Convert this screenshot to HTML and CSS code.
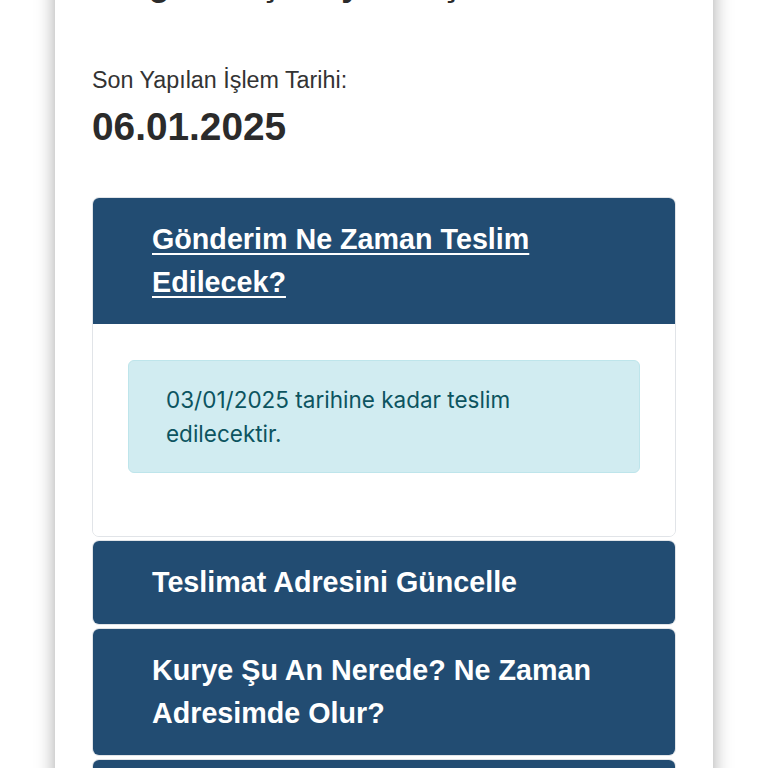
FILE: index.html
```html
<!DOCTYPE html>
<html lang="tr">
<head>
<meta charset="utf-8">
<title>Gönderi Takibi</title>
<link rel="stylesheet" href="styles.css">
</head>
<body>
<main class="card">
  <h1 class="title">Kargonuz Şubeye Ulaştı</h1>
  <p class="label">Son Yapılan İşlem Tarihi:</p>
  <p class="date">06.01.2025</p>
  <div class="accordion">
    <section class="item open">
      <div class="item-head"><a class="item-link" href="#">Gönderim Ne Zaman Teslim Edilecek?</a></div>
      <div class="item-body">
        <div class="alert">03/01/2025 tarihine kadar teslim edilecektir.</div>
      </div>
    </section>
    <section class="item">
      <div class="item-head"><span class="item-title">Teslimat Adresini Güncelle</span></div>
    </section>
    <section class="item">
      <div class="item-head"><span class="item-title">Kurye Şu An Nerede? Ne Zaman Adresimde Olur?</span></div>
    </section>
    <section class="item">
      <div class="item-head"><span class="item-title">Teslimat Noktasını Değiştir</span></div>
    </section>
  </div>
</main>
</body>
</html>
```
FILE: styles.css
```css
html, body {
  margin: 0;
  padding: 0;
  background: #ffffff;
}
body {
  font-family: "Liberation Sans", Arial, sans-serif;
  color: #2b2b2b;
  overflow: hidden;
}
.card {
  width: 584px;
  margin: -36px auto 0;
  padding: 0 37px 40px;
  background: #ffffff;
  box-shadow: 0 0 18px rgba(0, 0, 0, 0.35);
}
.title {
  margin: 0;
  font-size: 34px;
  line-height: 40px;
  font-weight: 700;
  color: #2b2b2b;
}
.label {
  margin: 61px 0 0;
  font-size: 23.3px;
  line-height: 30px;
  color: #333333;
}
.date {
  margin: 9px 0 0;
  font-size: 38.8px;
  line-height: 46px;
  font-weight: 700;
  color: #2b2b2b;
}
.accordion {
  margin-top: 47px;
  display: flex;
  flex-direction: column;
  gap: 3px;
}
.item {
  border: 1px solid #e1e4e8;
  border-radius: 7px;
  overflow: hidden;
}
.item-head {
  background: #224c72;
  padding: 20px 60px 20px 59px;
  font-size: 28.7px;
  line-height: 43px;
  font-weight: 700;
  color: #ffffff;
}
.item-link {
  color: #ffffff;
  text-decoration: underline;
  text-decoration-thickness: 2px;
  text-underline-offset: 4px;
}
.item-body {
  background: #ffffff;
  padding: 36px 35px 63px;
}
.alert {
  background: #d1ecf1;
  border: 1px solid #bee5eb;
  border-radius: 6px;
  padding: 21.5px 37px;
  color: #0c5460;
  font-family: "Inter", "Liberation Sans", sans-serif;
  font-size: 22.5px;
  line-height: 34px;
}
```
